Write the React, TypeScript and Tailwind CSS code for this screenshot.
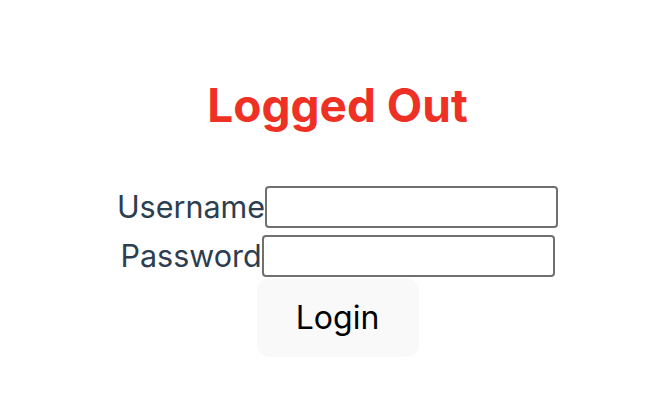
export default function App() {
  return (
    <div
      className="min-h-screen bg-white pl-[13px] pt-[77px] text-center text-[#2c3e50]"
      style={{ fontFamily: "Inter, 'Noto Sans', sans-serif" }}
    >
      <h1 className="text-[46px] font-bold leading-[56px] text-[#ee3124]">Logged Out</h1>
      <div className="mt-[53px] flex flex-col items-center">
        <div className="flex items-center justify-center">
          <label className="text-[30.5px] leading-[42px]">Username</label>
          <input
            type="text"
            className="h-[42px] w-[293px] rounded-[4px] border-2 border-[#707070] bg-white outline-none"
          />
        </div>
        <div className="mt-[7px] flex items-center justify-center">
          <label className="text-[30.5px] leading-[42px]">Password</label>
          <input
            type="password"
            className="h-[42px] w-[293px] rounded-[4px] border-2 border-[#707070] bg-white outline-none"
          />
        </div>
        <button className="mt-[1px] h-[79px] w-[162px] rounded-[13px] border border-transparent bg-[#f9f9f9] text-[32px] font-normal leading-[40px] text-black">
          Login
        </button>
      </div>
    </div>
  );
}
